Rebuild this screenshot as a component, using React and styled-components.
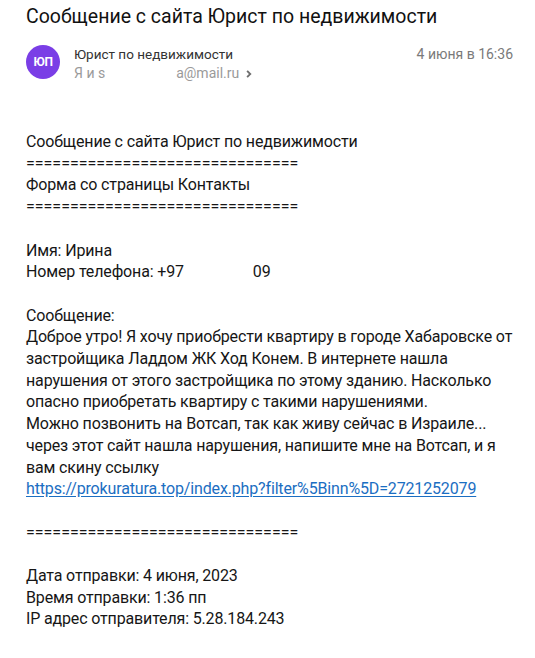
import React from "react";
import styled, { createGlobalStyle } from "styled-components";

const GlobalStyle = createGlobalStyle`
  html, body {
    margin: 0;
    padding: 0;
    background: #ffffff;
  }
  body {
    font-family: Roboto, "Noto Sans", Arial, sans-serif;
    color: #1f1f1f;
  }
`;

const letter = {
  subject: "Сообщение с сайта Юрист по недвижимости",
  sender: "Юрист по недвижимости",
  initials: "ЮП",
  date: "4 июня в 16:36",
  rule: "===============================",
  link: "https://prokuratura.top/index.php?filter%5Binn%5D=2721252079"
};

const App = () => {
  return (
    <Page>
      <GlobalStyle />
      <Subject>{letter.subject}</Subject>
      <MetaRow>
        <Avatar>{letter.initials}</Avatar>
        <SenderBlock>
          <SenderName>{letter.sender}</SenderName>
          <Recipients>
            <span>Я и s</span>
            <HiddenGap />
            <span>a@mail.ru</span>
            <Chevron viewBox="0 0 8 8">
              <path d="M2.5 1.5 L5 4 L2.5 6.5" />
            </Chevron>
          </Recipients>
        </SenderBlock>
        <DateLabel>{letter.date}</DateLabel>
      </MetaRow>

      <Body>
        <Line>{letter.subject}</Line>
        <Rule>{letter.rule}</Rule>
        <Line>Форма со страницы Контакты</Line>
        <Rule>{letter.rule}</Rule>
        <Blank />
        <Line>Имя: Ирина</Line>
        <Line>
          Номер телефона: +97<PhoneGap />09
        </Line>
        <Blank />
        <Line>Сообщение:</Line>
        <Paragraph>
          Доброе утро! Я хочу приобрести квартиру в городе Хабаровске от
          застройщика Ладдом ЖК Ход Конем. В интернете нашла нарушения от этого
          застройщика по этому зданию. Насколько опасно приобретать квартиру с
          такими нарушениями.
        </Paragraph>
        <Line>Можно позвонить на Вотсап, так как живу сейчас в Израиле...</Line>
        <Paragraph>
          через этот сайт нашла нарушения, напишите мне на Вотсап, и я вам
          скину ссылку
        </Paragraph>
        <Line>
          <MailLink href="#">{letter.link}</MailLink>
        </Line>
        <Blank />
        <Rule>{letter.rule}</Rule>
        <Blank />
        <Line>Дата отправки: 4 июня, 2023</Line>
        <Line>Время отправки: 1:36 пп</Line>
        <Line>IP адрес отправителя: 5.28.184.243</Line>
      </Body>
    </Page>
  );
};

export default App;

const Page = styled.div`
  width: 535px;
  min-height: 658px;
  box-sizing: border-box;
  padding: 3px 22px 0 26px;
`;

const Subject = styled.h1`
  margin: 0;
  font-size: 19.5px;
  font-weight: 400;
  line-height: 28px;
  color: #111111;
  white-space: nowrap;
`;

const MetaRow = styled.div`
  display: flex;
  align-items: flex-start;
  margin-top: 14px;
`;

const Avatar = styled.div`
  display: flex;
  align-items: center;
  justify-content: center;
  flex: none;
  width: 34px;
  height: 34px;
  border-radius: 50%;
  background: #7a3ee6;
  color: #ffffff;
  font-size: 12px;
  font-weight: 700;
  letter-spacing: -0.3px;
`;

const SenderBlock = styled.div`
  display: flex;
  flex-direction: column;
  margin-left: 14px;
  flex: 1;
`;

const SenderName = styled.div`
  font-size: 13.5px;
  line-height: 18px;
  color: #333333;
`;

const Recipients = styled.div`
  display: flex;
  align-items: center;
  font-size: 14px;
  line-height: 18px;
  color: #9a9a9a;
  margin-top: 1px;
`;

const HiddenGap = styled.span`
  display: inline-block;
  width: 71px;
`;

const Chevron = styled.svg`
  width: 10px;
  height: 10px;
  margin-left: 5px;
  margin-top: 1px;
  fill: none;
  stroke: #6f6f6f;
  stroke-width: 1.5;
`;

const DateLabel = styled.div`
  font-size: 14px;
  line-height: 18px;
  color: #7a7a7a;
  white-space: nowrap;
`;

const Body = styled.div`
  margin-top: 49px;
  font-size: 16px;
  line-height: 21.7px;
  letter-spacing: -0.15px;
  color: #161616;
`;

const Line = styled.div`
  white-space: nowrap;
  min-height: 21.7px;
`;

const Rule = styled(Line)`
  letter-spacing: 0;
`;

const Blank = styled.div`
  height: 21.7px;
`;

const Paragraph = styled.div`
  max-width: 488px;
`;

const PhoneGap = styled.span`
  display: inline-block;
  width: 69px;
`;

const MailLink = styled.a`
  color: #1b6ec2;
  text-decoration: underline;
  text-underline-offset: 2px;
`;
